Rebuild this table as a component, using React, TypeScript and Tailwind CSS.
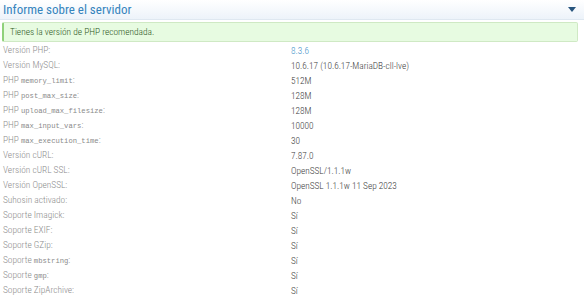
import React from "react";

type Row = { label: React.ReactNode; value: React.ReactNode; link?: boolean };

const M = ({ children }: { children: React.ReactNode }) => (
  <code className="font-['Liberation_Mono',monospace] text-[7.2px] text-[#8a8a8a]">{children}</code>
);

const rows: Row[] = [
  { label: "Versión PHP:", value: "8.3.6", link: true },
  { label: "Versión MySQL:", value: "10.6.17 (10.6.17-MariaDB-cll-lve)" },
  { label: <>PHP <M>memory_limit</M>:</>, value: "512M" },
  { label: <>PHP <M>post_max_size</M>:</>, value: "128M" },
  { label: <>PHP <M>upload_max_filesize</M>:</>, value: "128M" },
  { label: <>PHP <M>max_input_vars</M>:</>, value: "10000" },
  { label: <>PHP <M>max_execution_time</M>:</>, value: "30" },
  { label: "Versión cURL:", value: "7.87.0" },
  { label: "Versión cURL SSL:", value: "OpenSSL/1.1.1w" },
  { label: "Versión OpenSSL:", value: "OpenSSL 1.1.1w 11 Sep 2023" },
  { label: "Suhosin activado:", value: "No" },
  { label: "Soporte Imagick:", value: "Sí" },
  { label: "Soporte EXIF:", value: "Sí" },
  { label: "Soporte GZip:", value: "Sí" },
  { label: <>Soporte <M>mbstring</M>:</>, value: "Sí" },
  { label: <>Soporte <M>gmp</M>:</>, value: "Sí" },
  { label: "Soporte ZipArchive:", value: "Sí" },
];

export default function App() {
  return (
    <div className="w-[584px] h-[300px] overflow-hidden bg-white font-['Roboto_Condensed','Roboto',sans-serif]">
      <div className="flex h-[20px] items-center justify-between border-b border-[#dfe8f1] bg-gradient-to-b from-[#ffffff] to-[#edf3fa] pl-[3px] pr-[8px]">
        <span className="text-[13px] font-normal leading-none text-[#3584bd]">Informe sobre el servidor</span>
        <svg width="8" height="5" viewBox="0 0 8 5">
          <path d="M0 0 L8 0 L4 5 Z" fill="#28557e" />
        </svg>
      </div>
      <div className="ml-[2px] mr-[6px] mt-[2px] flex h-[20px] items-center rounded-[2px] border border-l-2 border-[#cfe9c4] border-l-[#8fd17a] bg-[#e7fbe1] pl-[6px] text-[9.4px] font-light text-[#2a5620]">
        Tienes la versión de PHP recomendada.
      </div>
      <div className="mt-[1px] font-light">
        {rows.map((r, i) => (
          <div key={i} className="flex h-[15px] items-center">
            <div className="w-[291px] pl-[3px] text-[9.4px] text-[#8c8c8c]">{r.label}</div>
            <div className={"text-[9.3px] " + (r.link ? "text-[#3d8fc9]" : "text-[#3a3a3a]")}>{r.value}</div>
          </div>
        ))}
      </div>
    </div>
  );
}
